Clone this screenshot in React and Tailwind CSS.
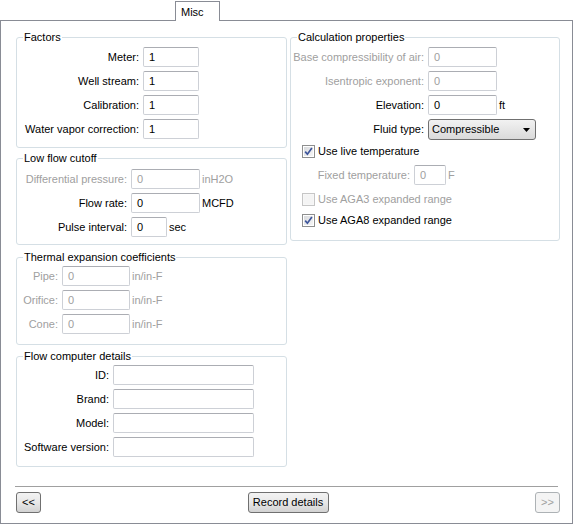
import React from "react";

const gray = "text-[#a0a0a0]";

function TextBox({ w, value = "", disabled }) {
  return (
    <div
      className={`${w} h-[20px] shrink-0 border border-[#cdd0d6] border-t-[#abadb3] rounded-[2px] bg-white pl-[5px] flex items-center ${
        disabled ? gray : "text-black"
      }`}
    >
      {value}
    </div>
  );
}

function Field({ label, labelW, boxW, value, unit, disabled }) {
  return (
    <div className="flex items-center h-[20px]">
      <div className={`${labelW} shrink-0 text-right whitespace-nowrap ${disabled ? gray : "text-black"}`}>
        {label}
      </div>
      <div className="ml-[4px]">
        <TextBox w={boxW} value={value} disabled={disabled} />
      </div>
      {unit && <span className={`ml-[2px] whitespace-nowrap ${disabled ? gray : "text-black"}`}>{unit}</span>}
    </div>
  );
}

function Check({ checked, disabled, label, className = "" }) {
  return (
    <div className={`flex items-center h-[13px] pl-[11px] ${className}`}>
      <div
        className={`w-[13px] h-[13px] shrink-0 border p-px ${
          disabled ? "border-[#c6c6c6] bg-[#f7f7f7]" : "border-[#8e8f8f] bg-white"
        }`}
      >
        <div
          className={`w-full h-full flex items-center justify-center ${
            disabled ? "bg-[#f4f4f4]" : "bg-linear-to-br from-[#d8dadd] to-[#f6f6f6]"
          }`}
        >
          {checked && (
            <svg width="9" height="9" viewBox="0 0 9 9">
              <path d="M1.2 4.6 L3.4 7.2 L7.9 1" fill="none" stroke="#3d559b" strokeWidth="1.7" />
            </svg>
          )}
        </div>
      </div>
      <span className={`ml-[3px] whitespace-nowrap ${disabled ? gray : "text-black"}`}>{label}</span>
    </div>
  );
}

function Group({ title, className = "", children }) {
  return (
    <fieldset className={`border border-[#d5dfe5] rounded-[3px] ${className}`}>
      <legend className="ml-[6px] px-px leading-[13px] text-black">{title}</legend>
      {children}
    </fieldset>
  );
}

function Button({ children, disabled, className = "" }) {
  return (
    <div
      className={`h-[21px] border rounded-[3px] flex items-center justify-center ${
        disabled
          ? "border-[#adb2b5] bg-[#f4f4f4] text-[#a0a0a0]"
          : "border-[#707070] bg-linear-to-b from-[#f3f3f3] via-[#e8e8e8] to-[#d2d2d2] text-black"
      } ${className}`}
    >
      {children}
    </div>
  );
}

export default function App() {
  return (
    <div className="w-[573px] h-[525px] bg-white text-[11px] leading-[13px] font-['Liberation_Sans',Arial,sans-serif] flex flex-col">
      {/* tab strip */}
      <div className="h-[21px] flex items-end shrink-0">
        <div className="w-[175px] h-full border-b border-[#898c95]" />
        <div className="w-[45px] h-[20px] border-t border-x border-[#898c95] bg-white pl-[5px] pt-[4px] text-black">
          Misc
        </div>
        <div className="flex-1 h-full border-b border-[#898c95]" />
      </div>

      {/* panel */}
      <div className="flex-1 mb-[1px] border-x border-b border-[#898c95] flex flex-col pt-[10px]">
        <div className="flex pl-[15px]">
          {/* left column */}
          <div className="w-[271px] flex flex-col">
            <Group title="Factors" className="h-[117px]">
              <div className="flex flex-col gap-[4px] pt-[3px]">
                <Field label="Meter:" labelW="w-[122px]" boxW="w-[56px]" value="1" />
                <Field label="Well stream:" labelW="w-[122px]" boxW="w-[56px]" value="1" />
                <Field label="Calibration:" labelW="w-[122px]" boxW="w-[56px]" value="1" />
                <Field label="Water vapor correction:" labelW="w-[122px]" boxW="w-[56px]" value="1" />
              </div>
            </Group>

            <Group title="Low flow cutoff" className="h-[93px] mt-[4px]">
              <div className="flex flex-col gap-[4px] pt-[4px]">
                <Field label="Differential pressure:" labelW="w-[110px]" boxW="w-[69px]" value="0" unit="inH2O" disabled />
                <Field label="Flow rate:" labelW="w-[110px]" boxW="w-[69px]" value="0" unit="MCFD" />
                <Field label="Pulse interval:" labelW="w-[110px]" boxW="w-[36px]" value="0" unit="sec" />
              </div>
            </Group>

            <Group title="Thermal expansion coefficients" className="h-[94px] mt-[6px]">
              <div className="flex flex-col gap-[4px] pt-[2px]">
                <Field label="Pipe:" labelW="w-[41px]" boxW="w-[68px]" value="0" unit="in/in-F" disabled />
                <Field label="Orifice:" labelW="w-[41px]" boxW="w-[68px]" value="0" unit="in/in-F" disabled />
                <Field label="Cone:" labelW="w-[41px]" boxW="w-[68px]" value="0" unit="in/in-F" disabled />
              </div>
            </Group>

            <Group title="Flow computer details" className="h-[117px] mt-[5px]">
              <div className="flex flex-col gap-[4px] pt-[2px]">
                <Field label="ID:" labelW="w-[92px]" boxW="w-[141px]" />
                <Field label="Brand:" labelW="w-[92px]" boxW="w-[141px]" />
                <Field label="Model:" labelW="w-[92px]" boxW="w-[141px]" />
                <Field label="Software version:" labelW="w-[92px]" boxW="w-[141px]" />
              </div>
            </Group>
          </div>

          {/* right column */}
          <div className="w-[270px] ml-[3px]">
            <Group title="Calculation properties" className="h-[210px]">
              <div className="flex flex-col pt-[3px]">
                <Field label="Base compressibility of air:" labelW="w-[133px]" boxW="w-[69px]" value="0" disabled />
                <div className="mt-[4px]">
                  <Field label="Isentropic exponent:" labelW="w-[133px]" boxW="w-[69px]" value="0" disabled />
                </div>
                <div className="mt-[4px]">
                  <Field label="Elevation:" labelW="w-[133px]" boxW="w-[69px]" value="0" unit="ft" />
                </div>
                <div className="flex items-center h-[21px] mt-[4px]">
                  <div className="w-[133px] text-right text-black">Fluid type:</div>
                  <div className="ml-[4px] w-[108px] h-[21px] border border-[#707070] rounded-[3px] bg-linear-to-b from-[#f2f2f2] to-[#dadada] flex items-center justify-between pl-[3px] pr-[5px] text-black">
                    <span>Compressible</span>
                    <svg width="7" height="4" viewBox="0 0 7 4">
                      <path d="M0 0H7L3.5 4Z" fill="#000" />
                    </svg>
                  </div>
                </div>
                <Check checked label="Use live temperature" className="mt-[5px]" />
                <div className="mt-[7px]">
                  <Field label="Fixed temperature:" labelW="w-[119px]" boxW="w-[32px]" value="0" unit="F" disabled />
                </div>
                <Check disabled label="Use AGA3 expanded range" className="mt-[8px]" />
                <Check checked label="Use AGA8 expanded range" className="mt-[8px]" />
              </div>
            </Group>
          </div>
        </div>

        {/* footer */}
        <div className="mt-auto">
          <div className="ml-[14px] w-[543px] h-px bg-[#a0a0a0]" />
          <div className="flex items-center justify-between pl-[15px] w-[559px] mt-[5px] mb-[10px]">
            <Button className="w-[25px]">&lt;&lt;</Button>
            <Button className="w-[81px]">Record details</Button>
            <Button disabled className="w-[25px]">&gt;&gt;</Button>
          </div>
        </div>
      </div>
    </div>
  );
}
